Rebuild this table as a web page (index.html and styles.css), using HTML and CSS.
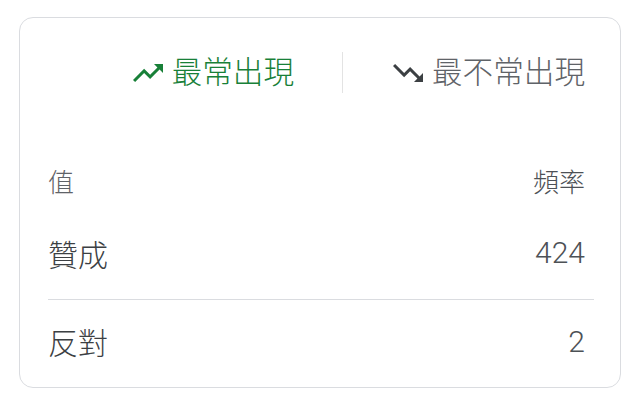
FILE: index.html
```html
<!DOCTYPE html>
<html lang="zh-Hant">
<head>
    <meta charset="UTF-8">
    <meta name="viewport" content="width=device-width, initial-scale=1.0">
    <title>出現頻率</title>
    <link rel="stylesheet" href="styles.css">
</head>
<body>
<div class="card">
    <div class="tabs">
        <div class="tab tab-active">
            <svg class="tab-icon" viewBox="0 0 24 24" width="36" height="36">
                <path fill="currentColor" d="M16 6l2.29 2.29-4.88 4.88-4-4L2 16.59 3.41 18l6-6 4 4 6.3-6.29L22 12V6z"/>
            </svg>
            <span>最常出現</span>
        </div>
        <div class="tab-sep"></div>
        <div class="tab">
            <svg class="tab-icon tab-icon-dark" viewBox="0 0 24 24" width="36" height="36">
                <path fill="currentColor" d="M16 18l2.29-2.29-4.88-4.88-4 4L2 7.41 3.41 6l6 6 4-4 6.3 6.29L22 12v6z"/>
            </svg>
            <span>最不常出現</span>
        </div>
    </div>
    <div class="table">
        <div class="table-head">
            <span>值</span>
            <span class="cell-num">頻率</span>
        </div>
        <div class="row">
            <span>贊成</span>
            <span class="cell-num">424</span>
        </div>
        <div class="row">
            <span>反對</span>
            <span class="cell-num">2</span>
        </div>
    </div>
</div>
</body>
</html>
```

FILE: styles.css
```css
body {
    margin: 0;
    background-color: #fff;
    font-family: Roboto, "Noto Sans CJK TC", sans-serif;
    font-weight: 300;
    color: #3c4043;
}
.card {
    box-sizing: border-box;
    width: 602px;
    height: 371px;
    margin: 17px 0 0 19px;
    padding: 0 26px 0 28px;
    border: 1px solid #dadce0;
    border-radius: 14px;
    display: flex;
    flex-direction: column;
}
.tabs {
    display: flex;
    justify-content: flex-end;
    align-items: center;
    height: 41px;
    margin-top: 34px;
    padding-right: 9px;
}
.tab {
    display: flex;
    align-items: center;
    gap: 6px;
    font-size: 30.6px;
    line-height: 41px;
    color: #5f6368;
}
.tab-active {
    color: #188038;
}
.tab-icon-dark {
    color: #3c4043;
}
.tab-sep {
    width: 1px;
    height: 41px;
    margin: 0 47px 0 48px;
    background-color: #e3e3e3;
}
.table {
    margin-top: 60px;
}
.table-head {
    display: flex;
    justify-content: space-between;
    align-items: center;
    height: 58px;
    padding-bottom: 3px;
    box-sizing: border-box;
    font-size: 26px;
    color: #5f6368;
}
.row {
    display: flex;
    justify-content: space-between;
    align-items: center;
    height: 88px;
    padding-bottom: 5px;
    box-sizing: border-box;
    font-size: 30px;
    color: #3c4043;
}
.row + .row {
    border-top: 1px solid #dadce0;
}
.cell-num {
    padding-right: 9px;
    color: #4d5156;
}
```
